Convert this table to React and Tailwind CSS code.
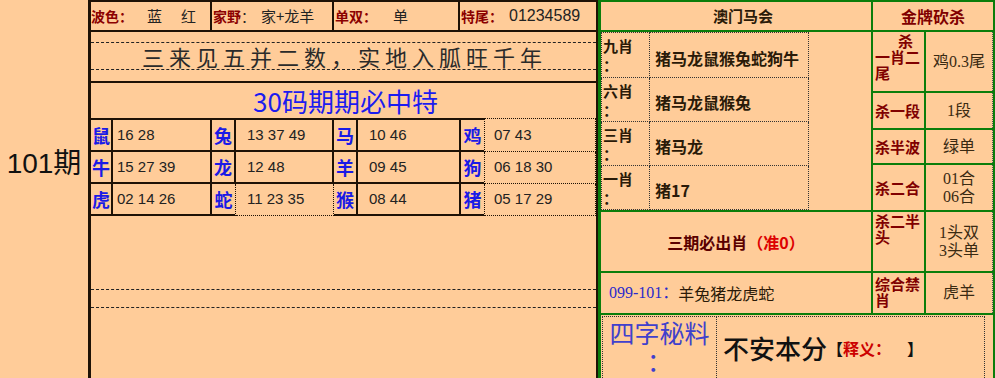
import React from "react";

const K = "border-[#1e1206]";
const G = "border-[#0b7d0b]";

const zrows = [
  [["鼠", "16 28"], ["兔", "13 37 49"], ["马", "10 46"], ["鸡", "07 43"]],
  [["牛", "15 27 39"], ["龙", "12 48"], ["羊", "09 45"], ["狗", "06 18 30"]],
  [["虎", "02 14 26"], ["蛇", "11 23 35"], ["猴", "08 44"], ["猪", "05 17 29"]],
];
const labW = ["w-[22px]", "w-[24px]", "w-[24px]", "w-[24px]"];
const numW = ["w-[99px] pl-[4px]", "w-[98px] pl-[11px]", "w-[103px] pl-[11px]", "flex-1 pl-[9px]"];

function ZodiacRow({ row, ri }) {
  const h = ri === 0 ? " h-[34px]" : " h-[32px]";
  return (
    <div className={"flex shrink-0" + h}>
      {row.map(([lab, nums], ci) => {
        const dotted = ci === 3 || (ri === 2 && ci === 1);
        const labCls =
          "shrink-0 flex items-center justify-center text-[18px] font-bold text-[#1a1ae6] font-['Noto_Sans_CJK_SC',serif] border-b-2 " +
          K +
          " " +
          labW[ci] +
          (ri === 0 ? " border-t-2" : "") +
          (dotted ? " border-r [border-right-style:dotted]" : " border-r-2");
        const numCls =
          "flex items-center text-[15px] text-[#222] font-['Liberation_Sans',sans-serif] " +
          K +
          " " +
          numW[ci] +
          (ri === 0 ? (ci === 3 ? " border-t [border-top-style:dotted]" : " border-t-2") : "") +
          (dotted ? " border-b [border-bottom-style:dotted] border-r [border-right-style:dotted]" : " border-b-2 border-r-2");
        return (
          <React.Fragment key={ci}>
            <div className={labCls}>{lab}</div>
            <div className={numCls}>{nums}</div>
          </React.Fragment>
        );
      })}
    </div>
  );
}

function ShawRow({ label, content, first }) {
  return (
    <div className={"flex h-[44px] shrink-0" + (first ? " h-[46px]" : "")}>
      <div
        className={
          "w-[49px] shrink-0 border-l border-r border-b border-dotted border-[#333] pl-[1px] pt-[3px] text-[15px] leading-[19px] font-bold text-[#2a1a08]" +
          (first ? " border-t" : "")
        }
      >
        <div>{label}</div>
        <div>：</div>
      </div>
      <div
        className={
          "w-[159px] shrink-0 border-r border-b border-dotted border-[#333] flex items-center pl-[5px] pt-[5px] text-[16px] font-bold text-[#2a1a08]" +
          (first ? " border-t" : "")
        }
      >
        {content}
      </div>
    </div>
  );
}

function KillRow({ h, label, value, last }) {
  return (
    <div className={"flex shrink-0 " + h + (last ? "" : " border-b-2 " + G)}>
      <div className={"w-[53px] shrink-0 border-r-2 " + G + " text-[15px] leading-[16px] font-bold text-[#800000]"}>
        {label}
      </div>
      <div className="flex-1 border-r border-dotted border-[#555] flex items-center justify-center text-center text-[16px] leading-[18px] text-[#3a2a12] font-['Liberation_Serif','Noto_Sans_CJK_SC',serif]">
        {value}
      </div>
    </div>
  );
}

export default function App() {
  return (
    <div className="flex w-[995px] h-[378px] overflow-hidden bg-[#ffcc99] font-['Noto_Sans_CJK_SC',sans-serif] text-[#222]">
      {/* Left period column */}
      <div className="w-[88px] shrink-0 flex justify-center pt-[144px]">
        <div className="text-[28px] leading-[40px] text-[#111] font-['Liberation_Sans','Noto_Sans_CJK_SC',sans-serif]">
          101期
        </div>
      </div>

      {/* Middle panel */}
      <div className={"w-[510px] shrink-0 flex flex-col border-l-[3px] border-t-2 border-r-2 " + K}>
        {/* Row 1 */}
        <div className={"flex h-[30px] shrink-0 border-b-2 " + K}>
          <div className={"w-[121px] shrink-0 border-r-2 " + K + " flex items-center"}>
            <span className="text-[14px] font-bold text-[#8b0000]">波色：</span>
            <span className="ml-[14px] text-[15px]">蓝</span>
            <span className="ml-[19px] text-[15px]">红</span>
          </div>
          <div className={"w-[122px] shrink-0 border-r-2 " + K + " flex items-center pl-[1px]"}>
            <span className="text-[14px] font-bold text-[#8b0000]">家野</span>
            <span className="text-[14px]">：</span>
            <span className="ml-[6px] text-[15px]">家+龙羊</span>
          </div>
          <div className={"w-[126px] shrink-0 border-r-2 " + K + " flex items-center pl-[1px]"}>
            <span className="text-[14px] font-bold text-[#8b0000]">单双：</span>
            <span className="ml-[16px] text-[15px]">单</span>
          </div>
          <div className="flex-1 flex items-center pl-[1px]">
            <span className="text-[14px] font-bold text-[#8b0000]">特尾：</span>
            <span className="ml-[6px] text-[16px] text-[#222] font-['Liberation_Sans',sans-serif]">01234589</span>
          </div>
        </div>

        {/* Row 2: poem */}
        <div className={"h-[51px] shrink-0 border-b-2 " + K + " pt-[10px]"}>
          <div className="h-[28px] border-y border-dashed border-[#222] flex items-center justify-center text-[22px] tracking-[5px] text-[#2a2a2a] leading-none pl-[2px]">
            三来见五并二数，实地入胍旺千年
          </div>
        </div>

        {/* Row 3: 30码 */}
        <div className="h-[35px] shrink-0 flex items-center justify-center pl-[4px]">
          <span className="text-[26px] leading-none text-[#1c1cf0]">30码期期必中特</span>
        </div>

        {zrows.map((row, ri) => (
          <ZodiacRow key={ri} row={row} ri={ri} />
        ))}

        {/* Empty area */}
        <div className="flex-1 pt-[73px]">
          <div className="h-[19px] border-y border-dashed border-[#222]" />
        </div>
      </div>

      {/* Right panel */}
      <div className={"w-[397px] shrink-0 flex flex-col border-l-[3px] border-t-2 border-r-2 " + G}>
        {/* Header */}
        <div className={"flex h-[30px] shrink-0 border-b-2 " + G}>
          <div className={"w-[272px] shrink-0 border-r-2 " + G + " flex items-center justify-center pl-[14px] text-[15px] font-bold text-[#2a1a08]"}>
            澳门马会
          </div>
          <div className="flex-1 flex items-center justify-center text-[16px] font-bold text-[#800000]">金牌砍杀</div>
        </div>

        {/* Body */}
        <div className="flex h-[281px] shrink-0">
          <div className={"w-[272px] shrink-0 flex flex-col border-r-2 " + G}>
            <div className={"h-[180px] shrink-0 border-b-2 " + G}>
              <ShawRow first label="九肖" content="猪马龙鼠猴兔蛇狗牛" />
              <ShawRow label="六肖" content="猪马龙鼠猴兔" />
              <ShawRow label="三肖" content="猪马龙" />
              <ShawRow label="一肖" content="猪17" />
            </div>
            <div className={"h-[61px] shrink-0 border-b-2 " + G + " flex items-center justify-center text-[16px] font-bold"}>
              <span className="text-[#5a0000]">三期必出肖</span>
              <span className="text-[#dd0000]">（准0）</span>
            </div>
            <div className="flex-1 flex items-center pl-[8px]">
              <span className="text-[16px] text-[#2a2acc] font-['Liberation_Serif','Noto_Sans_CJK_SC',serif]">099-101：</span>
              <span className="text-[16px] text-[#2a1a08]">羊兔猪龙虎蛇</span>
            </div>
          </div>

          <div className="flex-1 flex flex-col">
            <KillRow
              h="h-[61px]"
              label={
                <div className="pt-[1px] pl-[2px]">
                  <div className="pl-[23px]">杀</div>
                  <div>一肖二</div>
                  <div>尾</div>
                </div>
              }
              value="鸡0.3尾"
            />
            <KillRow
              h="h-[37px]"
              label={<div className="h-full flex items-center pl-[2px]">杀一段</div>}
              value="1段"
            />
            <KillRow
              h="h-[35px]"
              label={<div className="h-full flex items-center pl-[2px]">杀半波</div>}
              value="绿单"
            />
            <KillRow
              h="h-[47px]"
              label={<div className="h-full flex items-center pl-[2px]">杀二合</div>}
              value={
                <div>
                  <div>01合</div>
                  <div>06合</div>
                </div>
              }
            />
            <KillRow
              h="h-[61px]"
              label={
                <div className="pt-[1px] pl-[2px]">
                  <div>杀二半</div>
                  <div>头</div>
                </div>
              }
              value={
                <div>
                  <div>1头双</div>
                  <div>3头单</div>
                </div>
              }
            />
            <KillRow
              h="flex-1"
              last
              label={
                <div className="pt-[3px] pl-[2px]">
                  <div>综合禁</div>
                  <div>肖</div>
                </div>
              }
              value="虎羊"
            />
          </div>
        </div>

        {/* 四字秘料 */}
        <div className={"flex-1 border-t-2 " + G + " pt-[1px] pl-[1px]"}>
          <div className="w-[383px] h-full flex border-l border-t border-r border-dotted border-[#333]">
            <div className="w-[114px] shrink-0 border-r border-dotted border-[#333] text-center text-[25px] leading-[28px] pt-[1px] text-[#4040cc]">
              <div>四字秘料</div>
              <div>：</div>
            </div>
            <div className="flex-1 flex items-center pl-[6px]">
              <span className="text-[26px] font-medium text-[#111] leading-none">不安本分</span>
              <span className="text-[16px] font-bold text-[#111]">【</span>
              <span className="text-[16px] font-bold text-[#cc0000]">释义：</span>
              <span className="ml-[16px] text-[16px] font-bold text-[#111]">】</span>
            </div>
          </div>
        </div>
      </div>
    </div>
  );
}
